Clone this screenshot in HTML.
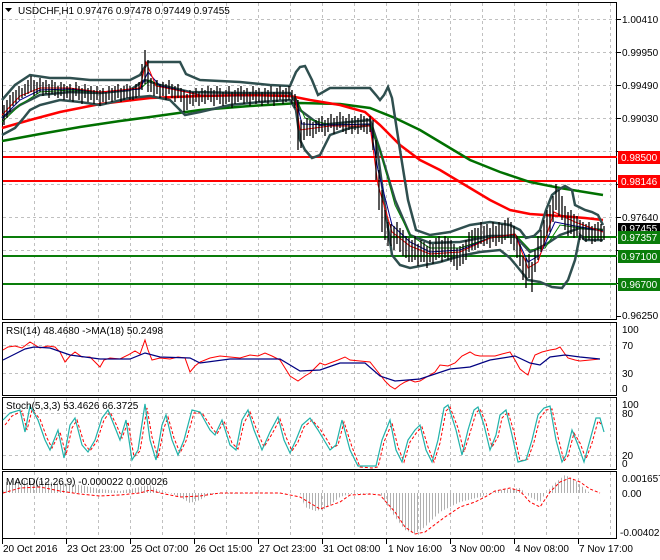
<!DOCTYPE html>
<html><head><meta charset="utf-8"><style>
html,body{margin:0;padding:0;background:#fff;}
svg{display:block;font-family:"Liberation Sans",sans-serif;}
</style></head><body>
<svg width="660" height="560" viewBox="0 0 660 560" xmlns="http://www.w3.org/2000/svg">
<defs>
<pattern id="hist" width="3" height="4" patternUnits="userSpaceOnUse"><rect x="0" y="0" width="1" height="4" fill="#b0b0b0"/></pattern>
</defs>
<rect width="660" height="560" fill="#fff"/>
<g stroke="#c0c0c0" stroke-width="1" stroke-dasharray="3,3">
<path d="M34.5 3V319M66.5 3V319M98.5 3V319M130.5 3V319M162.5 3V319M194.5 3V319M226.5 3V319M258.5 3V319M290.5 3V319M322.5 3V319M354.5 3V319M386.5 3V319M418.5 3V319M450.5 3V319M482.5 3V319M514.5 3V319M546.5 3V319M578.5 3V319M610.5 3V319"/>
<path d="M34.5 323V395M66.5 323V395M98.5 323V395M130.5 323V395M162.5 323V395M194.5 323V395M226.5 323V395M258.5 323V395M290.5 323V395M322.5 323V395M354.5 323V395M386.5 323V395M418.5 323V395M450.5 323V395M482.5 323V395M514.5 323V395M546.5 323V395M578.5 323V395M610.5 323V395"/>
<path d="M34.5 398V469M66.5 398V469M98.5 398V469M130.5 398V469M162.5 398V469M194.5 398V469M226.5 398V469M258.5 398V469M290.5 398V469M322.5 398V469M354.5 398V469M386.5 398V469M418.5 398V469M450.5 398V469M482.5 398V469M514.5 398V469M546.5 398V469M578.5 398V469M610.5 398V469"/>
<path d="M34.5 472V538M66.5 472V538M98.5 472V538M130.5 472V538M162.5 472V538M194.5 472V538M226.5 472V538M258.5 472V538M290.5 472V538M322.5 472V538M354.5 472V538M386.5 472V538M418.5 472V538M450.5 472V538M482.5 472V538M514.5 472V538M546.5 472V538M578.5 472V538M610.5 472V538"/>
<path d="M3 19.5H617M3 52.5H617M3 85.5H617M3 118.5H617M3 151.5H617M3 184.5H617M3 217.5H617M3 250.5H617M3 283.5H617"/>
<path d="M3 345.5H617M3 373.5H617M3 413.5H617M3 455.5H617"/>
</g>
<g fill="none" stroke="#000" stroke-width="1">
<rect x="2.5" y="2.5" width="614" height="317"/>
<rect x="2.5" y="322.5" width="614" height="73"/>
<rect x="2.5" y="397.5" width="614" height="72"/>
<rect x="2.5" y="471.5" width="614" height="67"/>
</g>
<g stroke-width="2">
<path d="M3 157H617M3 181H617" stroke="#ff0000"/>
<path d="M3 237H617M3 256H617M3 284H617" stroke="#0a7d0a"/>
</g>
<polyline fill="none" stroke="#007000" stroke-width="2.5" points="2,141 40,134 80,127 120,121 150,117 200,110 250,106 300,103 340,104 370,108 395,118 420,130 445,145 470,160 500,172 530,182 560,188 603,195"/>
<polyline fill="none" stroke="#ff0000" stroke-width="2.5" points="2,128 30,120 60,112 100,104 150,98 200,96 250,95 290,96 310,100 340,105 365,112 380,125 400,145 420,160 440,170 465,185 490,200 510,210 530,214 560,216 585,218 603,220"/>
<g fill="none" stroke="#2f4f4f" stroke-width="2.5">
<polyline points="2,100 15,85 30,75 50,78 70,78 90,80 110,80 130,80 140,75 148,62 180,62 186,74 200,80 240,82 270,85 290,86 296,72 300,67 305,66 312,80 318,95 330,88 370,88 376,95 380,100 384,95 388,87 392,98 400,150 408,200 416,230 430,235 450,232 470,225 490,222 510,225 520,230 526,238 534,236 540,230 546,210 552,195 558,190 565,186 572,190 575,205 585,210 592,212 598,215 603,225"/>
<polyline points="2,135 15,128 22,120 30,110 40,105 60,100 80,102 100,105 130,98 150,96 170,100 185,115 200,112 230,105 260,102 290,100 296,110 300,140 305,150 312,158 320,155 330,135 350,128 370,125 376,140 384,200 392,255 400,265 410,268 420,266 440,262 460,256 480,252 500,250 510,258 520,270 528,280 540,282 552,287 562,288 568,280 575,260 580,235 585,240 595,240 603,240"/>
<polyline points="2,118 20,105 40,95 70,92 100,93 130,90 145,80 160,85 190,92 240,93 290,93 300,110 320,125 370,120 380,150 395,200 410,235 430,243 460,242 490,236 515,236 530,252 545,245 560,235 580,228 603,230"/>
</g>
<polyline fill="none" stroke="#008000" stroke-width="1" points="2,122 20,105 40,92 70,90 100,92 140,89 150,80 160,86 200,95 250,96 295,96 305,118 330,125 370,124 380,150 395,205 410,235 430,248 460,248 490,238 515,234 530,250 545,248 560,225 580,228 603,230"/>
<polyline fill="none" stroke="#00008b" stroke-width="1" points="2,118 20,100 40,90 70,89 100,92 140,89 148,72 160,86 200,95 250,96 295,96 302,124 330,125 370,124 378,170 392,225 410,242 430,252 460,250 490,238 515,234 528,262 540,255 555,222 575,226 603,231"/>
<polyline fill="none" stroke="#ff0000" stroke-width="1" points="2,115 20,96 40,88 70,88 100,92 140,88 146,62 156,86 200,95 250,96 295,96 300,130 330,126 370,126 378,185 392,232 410,246 430,254 460,252 490,238 515,234 528,268 538,262 554,212 575,222 603,232"/>
<path stroke="#000" stroke-width="1.3" fill="none" d="M4 105V125M7 100V118M10 95V112M13 92V106M16 90V104M19 86V100M22 88V98M25 84V96M28 80V94M31 76V92M34 80V96M37 82V94M40 78V92M43 82V96M46 80V94M49 84V98M52 80V94M55 82V96M58 86V98M61 82V96M64 84V100M67 86V98M70 84V100M73 88V102M76 82V96M79 86V100M82 88V104M85 84V98M88 88V102M91 86V100M94 90V104M97 86V100M100 90V106M103 88V102M106 92V104M109 86V100M112 88V102M115 86V100M118 84V98M121 88V102M124 86V100M127 84V98M130 86V100M133 88V100M136 84V98M139 82V96M142 64V90M145 50V84M148 60V92M151 78V92M154 82V96M157 80V94M160 84V98M163 82V96M166 84V100M169 80V94M172 84V98M175 86V102M178 84V98M181 88V102M184 90V112M187 94V110M190 90V104M193 92V106M196 88V102M199 92V106M202 88V102M205 90V104M208 86V100M211 88V102M214 90V106M217 86V100M220 88V104M223 92V106M226 90V104M229 86V102M232 92V108M235 90V104M238 88V102M241 86V100M244 90V104M247 88V102M250 92V106M253 86V100M256 90V104M259 88V102M262 92V106M265 88V102M268 90V104M271 86V100M274 92V106M277 88V102M280 86V100M283 90V104M286 88V102M289 86V100M292 90V104M295 94V108M298 100V150M301 120V148M304 122V140M307 118V136M310 120V136M313 122V138M316 120V134M319 118V132M322 116V132M325 120V136M328 118V132M331 114V128M334 118V134M337 116V130M340 112V128M343 116V132M346 118V134M349 114V130M352 118V134M355 116V130M358 118V134M361 114V130M364 116V132M367 118V134M370 116V132M373 120V150M376 140V180M379 170V210M382 190V232M385 210V240M388 222V246M391 224V246M394 226V250M397 222V244M400 228V252M403 230V256M406 236V258M409 238V262M412 240V262M415 236V260M418 244V266M421 240V262M424 242V262M427 246V268M430 240V262M433 244V264M436 238V260M439 236V258M442 240V262M445 236V258M448 238V260M451 240V262M454 244V266M457 248V270M460 246V266M463 244V264M466 240V260M469 232V252M472 230V250M475 228V250M478 228V248M481 222V244M484 226V246M487 224V244M490 228V248M493 222V242M496 226V246M499 222V242M502 224V244M505 220V240M508 218V238M511 222V244M514 226V250M517 236V258M520 244V266M523 256V280M526 258V288M529 254V278M532 262V292M535 250V272M538 236V260M541 230V252M544 220V246M547 210V236M550 205V232M553 196V222M556 184V210M559 190V216M562 196V220M565 206V230M568 212V236M571 210V234M574 214V238M577 216V236M580 220V240M583 222V240M586 224V242M589 222V240M592 226V244M595 224V242M598 222V240M601 224V242M604 226V240"/>
<g font-size="10" fill="#000">
<text x="622" y="23">1.00410</text>
<text x="622" y="56">0.99950</text>
<text x="622" y="89">0.99490</text>
<text x="622" y="122">0.99030</text>
<text x="622" y="221">0.97640</text>
<text x="622" y="319">0.96250</text>
</g>
<g stroke="#000"><path d="M617 19.5H621M617 52.5H621M617 85.5H621M617 118.5H621M617 151.5H621M617 184.5H621M617 217.5H621M617 250.5H621M617 283.5H621M617 316.5H621"/></g>
<rect x="618" y="151" width="42" height="13" fill="#ff0000"/>
<text x="621" y="161" font-size="10" fill="#fff">0.98500</text>
<rect x="618" y="175" width="42" height="13" fill="#ff0000"/>
<text x="621" y="185" font-size="10" fill="#fff">0.98146</text>
<rect x="618" y="223" width="42" height="12" fill="#000"/>
<text x="621" y="232" font-size="10" fill="#fff">0.97455</text>
<rect x="618" y="231" width="42" height="13" fill="#0a7d0a"/>
<text x="621" y="241" font-size="10" fill="#fff">0.97357</text>
<rect x="618" y="250" width="42" height="13" fill="#0a7d0a"/>
<text x="621" y="260" font-size="10" fill="#fff">0.97100</text>
<rect x="618" y="278" width="42" height="13" fill="#0a7d0a"/>
<text x="621" y="288" font-size="10" fill="#fff">0.96700</text>
<path d="M5 8H12L8.5 12Z" fill="#000"/>
<text x="18" y="14" font-size="10" fill="#000">USDCHF,H1  0.97476 0.97478 0.97449 0.97455</text>
<polyline fill="none" stroke="#ff0000" stroke-width="1" points="3,350 8,347 15,346 22,348 30,342 35,345 40,348 48,346 55,347 60,352 65,362 70,356 75,352 82,357 90,357 95,362 100,367 104,360 110,358 120,359 128,355 135,351 140,354 145,340 148,350 152,360 160,358 170,359 178,357 185,358 190,372 195,366 200,362 210,358 220,356 230,357 240,358 250,355 258,356 265,353 272,356 280,360 285,368 290,376 298,381 305,376 310,373 315,368 320,363 325,365 330,363 338,360 345,357 350,360 360,361 370,362 378,372 385,381 390,386 395,389 400,385 405,382 410,380 415,382 420,381 425,378 430,375 435,372 440,365 448,366 455,363 462,356 470,352 475,355 480,356 488,356 495,356 502,354 510,352 515,360 520,369 525,373 528,375 532,362 535,355 542,352 550,350 556,349 560,347 565,354 568,358 575,360 580,361 590,360 600,359"/>
<polyline fill="none" stroke="#000080" stroke-width="1.2" points="3,360 15,354 25,349 34,347 50,348 70,355 100,359 130,359 145,353 160,357 190,358 200,363 230,359 280,359 300,371 320,370 340,363 365,363 380,376 395,381 420,379 450,369 470,367 490,360 515,356 530,363 540,365 550,357 565,355 580,357 600,359"/>
<g font-size="10" fill="#000">
<text x="6" y="334">RSI(14) 48.4680  -&gt;MA(18) 50.2498</text>
<text x="622" y="333">100</text>
<text x="622" y="349">70</text>
<text x="622" y="377">30</text>
<text x="622" y="392">0</text>
</g>
<polyline fill="none" stroke="#ff0000" stroke-width="1" stroke-dasharray="3,2" points="5,425 12,416 22,411 27,430 32,410 40,419 47,438 52,448 60,432 66,455 72,428 77,420 84,443 90,451 97,441 104,420 110,412 116,424 122,438 128,422 134,457 140,451 147,408 152,437 158,458 164,428 168,417 174,438 180,453 186,441 194,413 202,413 212,428 217,434 224,421 232,443 238,449 244,423 250,412 256,428 264,447 272,434 280,419 286,437 292,451 298,442 304,427 312,420 320,429 326,438 332,448 338,445 344,422 352,447 360,467 372,468 378,467 384,442 392,423 398,447 404,462 410,442 417,432 422,427 428,447 434,462 440,443 446,411 450,407 458,428 464,452 470,433 476,413 480,409 486,423 492,447 498,437 502,418 508,412 514,432 520,461 528,459 534,442 540,418 546,410 552,409 558,437 564,461 568,456 574,433 580,443 586,459 592,443 598,421 602,425"/>
<polyline fill="none" stroke="#20b2aa" stroke-width="1.2" points="3,420 10,413 20,410 25,432 30,406 38,420 45,440 50,450 58,430 64,458 70,425 75,418 82,445 88,452 95,440 102,418 108,410 114,425 120,440 126,420 132,460 138,450 145,404 150,440 156,460 162,425 166,415 172,440 178,455 184,440 192,410 200,412 210,430 215,435 222,420 230,445 236,450 242,420 248,410 254,430 262,450 270,432 278,417 284,440 290,453 296,440 302,425 310,418 318,430 324,440 330,450 336,445 342,420 350,450 358,466 370,466 376,466 382,440 390,420 396,450 402,462 408,440 415,430 420,425 426,450 432,462 438,440 444,408 448,405 456,430 462,455 468,430 474,410 478,407 484,425 490,450 496,435 500,415 506,410 512,435 518,462 526,460 532,440 538,415 544,408 550,406 556,440 562,462 566,455 572,430 578,445 584,462 590,440 596,418 600,418 604,432"/>
<g font-size="10" fill="#000">
<text x="6" y="409">Stoch(5,3,3) 53.4626 66.3725</text>
<text x="622" y="408">100</text>
<text x="622" y="417">80</text>
<text x="622" y="459">20</text>
<text x="622" y="467">0</text>
</g>
<g transform="translate(0,-3)">
<polygon fill="url(#hist)" points="3,496 6,485 20,483 40,484 60,486 80,488 100,492 120,494 140,490 150,488 160,494 170,496 180,500 190,506 200,503 210,497 300,496 305,510 315,514 325,512 340,500 350,497 380,496 385,505 395,520 405,533 415,537 425,530 440,515 460,505 480,500 490,496 500,493 520,491 530,500 540,505 545,497 555,486 565,478 575,483 585,492 590,496"/>
<polyline fill="none" stroke="#ff0000" stroke-width="1" stroke-dasharray="3,2" points="3,496 20,491 40,490 60,494 80,497 100,499 120,498 140,496 150,493 160,496 180,500 200,499 220,496 240,496 280,496 300,500 320,512 340,505 350,498 370,497 380,498 395,515 405,530 415,537 425,535 445,520 460,510 475,505 485,500 495,494 510,491 520,494 530,505 540,510 550,495 560,485 570,481 580,485 590,492 600,496"/>
</g>
<g font-size="10" fill="#000">
<text x="6" y="485">MACD(12,26,9) -0.000022 0.000026</text>
<text x="622" y="482">0.001657</text>
<text x="622" y="497">0.00</text>
<text x="620" y="536">-0.00402</text>
</g>
<g stroke="#000"><path d="M2.5 539V544M66.5 539V544M130.5 539V544M194.5 539V544M258.5 539V544M322.5 539V544M386.5 539V544M450.5 539V544M514.5 539V544M578.5 539V544"/></g>
<g font-size="10" fill="#000">
<text x="3" y="552">20 Oct 2016</text>
<text x="67" y="552">23 Oct 23:00</text>
<text x="131" y="552">25 Oct 07:00</text>
<text x="195" y="552">26 Oct 15:00</text>
<text x="259" y="552">27 Oct 23:00</text>
<text x="323" y="552">31 Oct 08:00</text>
<text x="388" y="552">1 Nov 16:00</text>
<text x="451" y="552">3 Nov 00:00</text>
<text x="515" y="552">4 Nov 08:00</text>
<text x="579" y="552">7 Nov 17:00</text>
</g>
</svg>
</body></html>
